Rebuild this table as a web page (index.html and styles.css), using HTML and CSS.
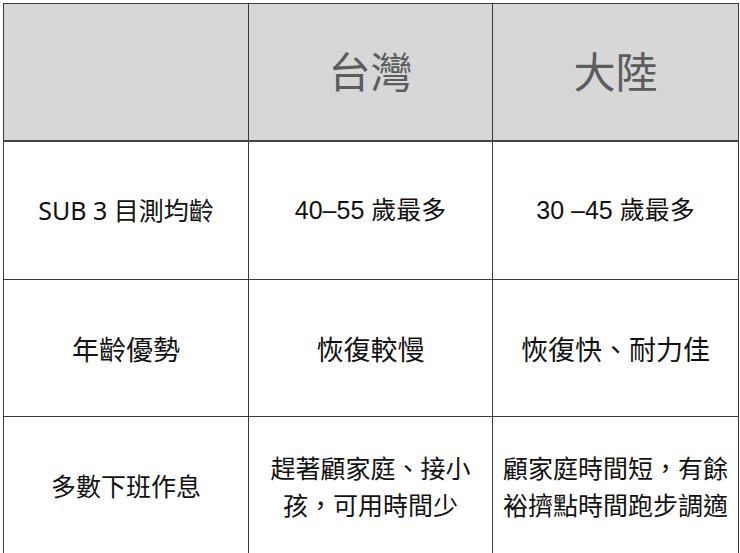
FILE: index.html
```html
<!DOCTYPE html>
<html lang="zh-Hant">
<head>
<meta charset="utf-8">
<link rel="stylesheet" href="styles.css">
</head>
<body>
<table class="cmp">
  <colgroup>
    <col class="c1"><col class="c2"><col class="c3">
  </colgroup>
  <thead>
    <tr class="head">
      <th></th>
      <th>台灣</th>
      <th>大陸</th>
    </tr>
  </thead>
  <tbody>
    <tr class="r1">
      <td class="latin">SUB 3 目測均齡</td>
      <td class="num">40–55 歲最多</td>
      <td class="num">30 –45 歲最多</td>
    </tr>
    <tr class="r2">
      <td>年齡優勢</td>
      <td>恢復較慢</td>
      <td>恢復快、耐力佳</td>
    </tr>
    <tr class="r3">
      <td>多數下班作息</td>
      <td class="multi">趕著顧家庭、接小<br>孩，可用時間少</td>
      <td class="multi">顧家庭時間短，有餘<br>裕擠點時間跑步調適</td>
    </tr>
  </tbody>
</table>
</body>
</html>
```
FILE: styles.css
```css
html, body {
  margin: 0;
  padding: 0;
  background: #ffffff;
}
body {
  padding: 3px 0 0 3px;
  font-family: "Noto Sans CJK TC", "Noto Sans", sans-serif;
}
.cmp {
  border-collapse: collapse;
  table-layout: fixed;
  width: 735px;
}
.c1 { width: 245px; }
.c2 { width: 244px; }
.c3 { width: 246px; }
.cmp th, .cmp td {
  border: 1.5px solid #3a3a3a;
  text-align: center;
  vertical-align: middle;
  padding: 0 6px;
}
.head th {
  height: 130px;
  padding-bottom: 6px;
  background: #d6d7d6;
  color: #5a5c5e;
  font-size: 42px;
  font-weight: 400;
  border-bottom: 2px solid #444;
}
.cmp td {
  font-size: 25px;
  color: #111111;
  line-height: 37px;
}
.r1 td { height: 137px; }
.r2 td { height: 136px; font-size: 27px; }
.r3 td { height: 137px; }
.latin {
  font-family: "Noto Sans", "Noto Sans CJK TC", sans-serif;
}
.num {
  font-family: "Liberation Sans", "Noto Sans CJK TC", sans-serif;
}
.multi {
  line-height: 38px;
}
```
